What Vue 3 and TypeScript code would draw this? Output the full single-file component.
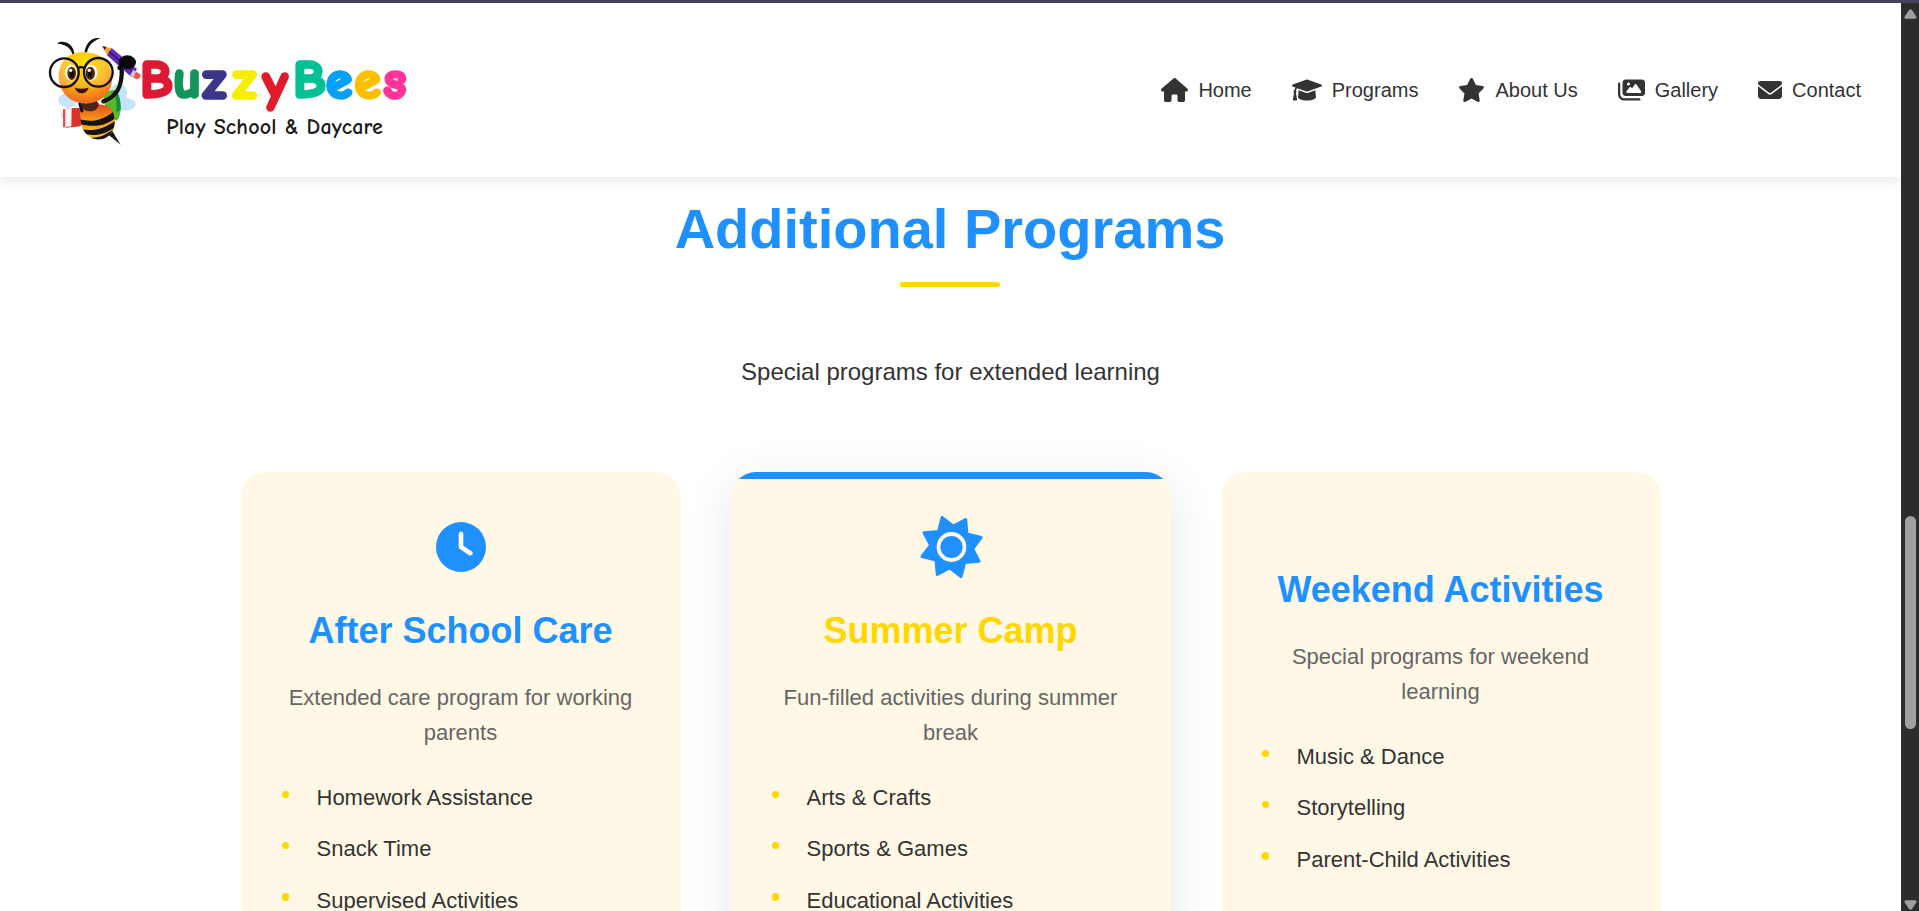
<script setup lang="ts">
interface NavItem {
  label: string
  width: number
  viewBox: string
  path: string
}

interface Program {
  title: string
  description: string
  icon: 'clock' | 'sun' | null
  featured: boolean
  features: string[]
}

interface Letter {
  char: string
  x: number
  y: number
  color: string
}

const letters: Letter[] = [
  { char: 'B', x: 140.2, y: 97, color: '#dc1a36' },
  { char: 'u', x: 173.2, y: 97, color: '#12945a' },
  { char: 'z', x: 203, y: 98, color: '#3b3689' },
  { char: 'z', x: 233.2, y: 98, color: '#f6f000' },
  { char: 'y', x: 262.9, y: 99.5, color: '#e01c2b' },
  { char: 'B', x: 293.3, y: 97, color: '#04c095' },
  { char: 'e', x: 326, y: 97.5, color: '#03a1f7' },
  { char: 'e', x: 354.6, y: 97.5, color: '#ffbf00' },
  { char: 's', x: 383.6, y: 98, color: '#ff3399' },
]

const navItems: NavItem[] = [
  {
    label: 'Home',
    width: 27,
    viewBox: '0 0 576 512',
    path: 'M575.8 255.5c0 18-15 32.1-32 32.1l-32 0 .7 160.2c0 2.7-.2 5.4-.5 8.1l0 16.2c0 22.1-17.9 40-40 40l-16 0c-1.1 0-2.2 0-3.3-.1c-1.4 .1-2.8 .1-4.2 .1L416 512l-24 0c-22.1 0-40-17.9-40-40l0-24 0-64c0-17.7-14.3-32-32-32l-64 0c-17.7 0-32 14.3-32 32l0 64 0 24c0 22.1-17.9 40-40 40l-24 0-31.9 0c-1.5 0-3-.1-4.5-.2c-1.2 .1-2.4 .2-3.6 .2l-16 0c-22.1 0-40-17.9-40-40l0-112c0-.9 0-1.9 .1-2.8l0-69.7-32 0c-18 0-32-14-32-32.1c0-9 3-17 10-24L266.4 8c7-7 15-8 22-8s15 2 21 7L564.8 231.5c8 7 12 15 11 24z',
  },
  {
    label: 'Programs',
    width: 30,
    viewBox: '0 0 640 512',
    path: 'M623.1 136.9l-282.7-101.2c-13.73-4.91-28.7-4.91-42.43 0L16.05 136.9C6.438 140.4 0 149.6 0 160s6.438 19.65 16.05 23.09L76.07 204.6c-11.89 15.8-20.26 34.16-24.55 53.95C40.05 263.4 32 274.8 32 288c0 9.953 4.814 18.49 11.94 24.36l-24.83 149C17.48 471.1 25 480 34.89 480H93.11c9.887 0 17.41-8.879 15.78-18.63l-24.83-149C91.19 306.5 96 297.1 96 288c0-10.29-5.174-19.03-12.72-24.89c4.252-17.76 12.88-33.82 24.94-47.03l190.6 68.23c13.73 4.91 28.7 4.91 42.43 0l282.7-101.2C633.6 179.6 640 170.4 640 160S633.6 140.4 623.1 136.9zM351.1 314.4C341.7 318.1 330.9 320 320 320c-10.92 0-21.69-1.867-32-5.555L142.8 262.5L128 405.3C128 446.6 213.1 480 320 480c105.1 0 192-33.4 192-74.67l-14.78-142.9L351.1 314.4z',
  },
  {
    label: 'About Us',
    width: 27,
    viewBox: '0 0 576 512',
    path: 'M316.9 18C311.6 7 300.4 0 288.1 0s-23.4 7-28.8 18L195 150.3 51.4 171.5c-12 1.8-22 10.2-25.7 21.7s-.7 24.2 7.9 32.7L137.8 329 113.2 474.7c-2 12 3 24.2 12.9 31.3s23 8 33.8 2.3l128.3-68.5 128.3 68.5c10.8 5.7 23.9 4.9 33.8-2.3s14.9-19.3 12.9-31.3L438.5 329 542.7 225.9c8.6-8.5 11.7-21.2 7.9-32.7s-13.7-19.9-25.7-21.7L381.2 150.3 316.9 18z',
  },
  {
    label: 'Gallery',
    width: 27,
    viewBox: '0 0 576 512',
    path: 'M160 32c-35.3 0-64 28.7-64 64l0 224c0 35.3 28.7 64 64 64l352 0c35.3 0 64-28.7 64-64l0-224c0-35.3-28.7-64-64-64L160 32zM396 138.7l96 144c4.9 7.4 5.4 16.8 1.2 24.6S480.9 320 472 320l-144 0-48 0-80 0c-9.2 0-17.6-5.3-21.6-13.6s-2.9-18.2 2.9-25.4l64-80c4.6-5.7 11.4-9 18.7-9s14.2 3.3 18.7 9l17.3 21.6 56-84C360.5 132 368 128 376 128s15.5 4 20 10.7zM192 128a32 32 0 1 1 64 0 32 32 0 1 1 -64 0zM48 120c0-13.3-10.7-24-24-24S0 106.7 0 120L0 344c0 75.1 60.9 136 136 136l320 0c13.3 0 24-10.7 24-24s-10.7-24-24-24l-320 0c-48.6 0-88-39.4-88-88l0-224z',
  },
  {
    label: 'Contact',
    width: 24,
    viewBox: '0 0 512 512',
    path: 'M48 64C21.5 64 0 85.5 0 112c0 15.1 7.1 29.3 19.2 38.4L236.8 313.6c11.4 8.5 27 8.5 38.4 0L492.8 150.4c12.1-9.1 19.2-23.3 19.2-38.4c0-26.5-21.5-48-48-48L48 64zM0 176L0 384c0 35.3 28.7 64 64 64l384 0c35.3 0 64-28.7 64-64l0-208L294.4 339.2c-22.8 17.1-54 17.1-76.8 0L0 176z',
  },
]

const programs: Program[] = [
  {
    title: 'After School Care',
    description: 'Extended care program for working parents',
    icon: 'clock',
    featured: false,
    features: ['Homework Assistance', 'Snack Time', 'Supervised Activities'],
  },
  {
    title: 'Summer Camp',
    description: 'Fun-filled activities during summer break',
    icon: 'sun',
    featured: true,
    features: ['Arts & Crafts', 'Sports & Games', 'Educational Activities'],
  },
  {
    title: 'Weekend Activities',
    description: 'Special programs for weekend learning',
    icon: null,
    featured: false,
    features: ['Music & Dance', 'Storytelling', 'Parent-Child Activities'],
  },
]
</script>

<template>
  <div class="window">
    <div class="window-edge"></div>
    <div class="viewport">
      <div class="page">
        <header class="header">
          <svg class="logo" viewBox="40 25 380 130" role="img" aria-label="BuzzyBees Play School & Daycare">
            <defs>
              <radialGradient id="face" cx="0.48" cy="0.2" r="0.85">
                <stop offset="0" stop-color="#ffe000" />
                <stop offset="0.5" stop-color="#fdb913" />
                <stop offset="1" stop-color="#ee5a24" />
              </radialGradient>
              <linearGradient id="body" x1="0" y1="0" x2="0" y2="1">
                <stop offset="0" stop-color="#e8401c" />
                <stop offset="0.5" stop-color="#f8a01c" />
                <stop offset="1" stop-color="#ffc928" />
              </linearGradient>
              <linearGradient id="pencil" x1="0" y1="1" x2="1" y2="0">
                <stop offset="0" stop-color="#43219b" />
                <stop offset="1" stop-color="#9033d4" />
              </linearGradient>
              <clipPath id="abdomen">
                <path d="M122 243C150 234 190 234 212 248C232 280 226 318 204 334C186 348 160 347 143 331C120 310 116 278 122 243Z" />
              </clipPath>
            </defs>

            <g transform="translate(40 25) scale(0.33333)">
              <g fill="#c5e4f8">
                <ellipse cx="236" cy="204" rx="25" ry="29" />
                <ellipse cx="257" cy="238" rx="30" ry="19" />
                <ellipse cx="84" cy="226" rx="29" ry="22" />
                <ellipse cx="90" cy="270" rx="27" ry="22" />
              </g>
              <path d="M190 215C205 190 228 188 236 212C244 240 244 270 232 286C222 288 208 278 200 265Z" fill="#55b92f" />
              <path d="M214 207C231 207 232 241 228 262L242 256C244 227 236 197 222 196Z" fill="#168f43" />
              <path d="M200 325L242 359L219 322L207 303Z" fill="#111" />
              <g clip-path="url(#abdomen)">
                <rect x="110" y="230" width="125" height="120" fill="url(#body)" />
                <path d="M118 283C155 293 190 286 219 260L228 277C195 306 155 306 118 297Z" fill="#17120f" />
                <path d="M120 311C156 322 193 311 226 287L225 305C200 328 160 336 128 325Z" fill="#17120f" />
                <path d="M136 335C165 343 192 335 220 313L202 348L152 350Z" fill="#17120f" />
              </g>
              <ellipse cx="150" cy="240" rx="26" ry="19" fill="#4b2415" />
              <path d="M190 229C224 218 249 193 245 126" fill="none" stroke="#111" stroke-width="13" stroke-linecap="round" />
              <path d="M119 235L126 258" stroke="#111" stroke-width="9" stroke-linecap="round" />
              <path d="M75 252L119 249L122 303L77 308Z" fill="#b91f21" />
              <path d="M70 253L97 249L96 304L70 307Z" fill="#fff3f1" />
              <path d="M69 253L76 252L76 307L69 307Z" fill="#e4504d" />
              <path d="M95 250L119 249L122 303L94 307Z" fill="#d9332a" />
              <path d="M187 63L215 70L202 91Z" fill="#f3a23a" />
              <path d="M187 63L199 66L194 76Z" fill="#382117" />
              <path d="M215 69L291 132L275 157L201 91Z" fill="url(#pencil)" />
              <path d="M207 80L285 144" stroke="#35167e" stroke-width="5" />
              <path d="M279 134L291 142L282 160L270 153Z" fill="#c9c6d8" />
              <path d="M288 140L301 148C303 158 295 165 288 162L280 158Z" fill="#ef5a49" />
              <ellipse cx="262" cy="112" rx="26" ry="21" fill="#090909" />
              <ellipse cx="240" cy="128" rx="8" ry="7" fill="#090909" />
              <path d="M98 91C93 69 79 60 50 55C65 44 98 50 103 84Z" fill="#111" />
              <path d="M133 84C137 54 157 35 181 40C160 48 146 60 141 82Z" fill="#111" />
              <path d="M56 151C58 106 88 82 130 82C178 82 211 107 216 153C219 196 194 232 138 236C85 234 57 200 56 151Z" fill="url(#face)" />
              <ellipse cx="74" cy="143" rx="42" ry="43" fill="#fff" opacity="0.17" />
              <ellipse cx="176" cy="142" rx="42" ry="43" fill="#fff" opacity="0.12" />
              <ellipse cx="93" cy="143" rx="17" ry="24" fill="#fff" />
              <ellipse cx="153" cy="143" rx="19" ry="24" fill="#fff" />
              <ellipse cx="95" cy="145" rx="13" ry="20" fill="#5c2c16" />
              <ellipse cx="151" cy="145" rx="14" ry="20" fill="#5c2c16" />
              <ellipse cx="96" cy="146" rx="7" ry="13" fill="#180f0c" />
              <ellipse cx="150" cy="146" rx="7" ry="13" fill="#180f0c" />
              <circle cx="92" cy="136" r="5" fill="#fff" />
              <circle cx="148" cy="136" r="5" fill="#fff" />
              <g fill="none" stroke="#111" stroke-width="7">
                <circle cx="73" cy="143" r="43" />
                <circle cx="175" cy="142" r="43" />
                <path d="M114 129Q124 124 134 129" />
              </g>
              <path d="M104 188C116 192 131 192 146 188C139 210 112 210 104 188Z" fill="#3c1010" />
            </g>

            <g class="wordmark">
              <text
                v-for="(letter, index) in letters"
                :key="index"
                :x="letter.x"
                :y="letter.y"
                :fill="letter.color"
                :stroke="letter.color"
              >{{ letter.char }}</text>
            </g>
            <text class="tagline" x="166.3" y="134" textLength="216.5" lengthAdjust="spacing">Play School &amp; Daycare</text>
          </svg>

          <nav class="nav">
            <a v-for="item in navItems" :key="item.label" class="nav-link">
              <svg :width="item.width" height="24" :viewBox="item.viewBox" aria-hidden="true">
                <path :d="item.path" fill="currentColor" />
              </svg>
              <span>{{ item.label }}</span>
            </a>
          </nav>
        </header>

        <main class="section">
          <h2 class="section-title">Additional Programs</h2>
          <p class="section-subtitle">Special programs for extended learning</p>

          <div class="cards">
            <article v-for="program in programs" :key="program.title" class="card" :class="{ featured: program.featured }">
              <div class="card-icon" :class="{ empty: !program.icon }">
                <svg v-if="program.icon === 'clock'" width="50" height="50" viewBox="0 0 512 512" aria-hidden="true">
                  <path
                    fill="currentColor"
                    fill-rule="evenodd"
                    d="M256 0a256 256 0 1 1 0 512A256 256 0 1 1 256 0zM232 120l0 136c0 8 4 15.5 10.7 20l96 64c11 7.4 25.9 4.4 33.3-6.7s4.4-25.9-6.7-33.3L280 243.2 280 120c0-13.3-10.7-24-24-24s-24 10.7-24 24z"
                  />
                </svg>
                <svg v-else-if="program.icon === 'sun'" width="64" height="62" viewBox="-3 0.5 190 186" aria-hidden="true">
                  <path
                    d="M65 5L99 31L136 11L140 54L182 65L157 99L176 136L133 140L122 182L88 156L51 176L47 133L5 122L31 88L11 51L55 47Z"
                    fill="currentColor"
                    stroke="currentColor"
                    stroke-width="9"
                    stroke-linejoin="round"
                  />
                  <circle cx="93.5" cy="93.5" r="39" fill="none" stroke="#fff8e6" stroke-width="11.5" />
                </svg>
              </div>
              <h3 class="card-title">{{ program.title }}</h3>
              <p class="card-text">{{ program.description }}</p>
              <ul class="features">
                <li v-for="feature in program.features" :key="feature">{{ feature }}</li>
              </ul>
            </article>
          </div>
        </main>
      </div>

      <div class="scrollbar">
        <svg width="13" height="10" viewBox="0 0 13 10" aria-hidden="true">
          <path d="M5 1Q6.500-.6 8 1L12.300 7.600Q13 9.800 11 9.800H2Q0 9.800.700 7.600Z" fill="#a0a0a0" />
        </svg>
        <div class="thumb"></div>
        <svg width="13" height="10" viewBox="0 0 13 10" aria-hidden="true">
          <path d="M5 9Q6.500 10.600 8 9L12.300 2.400Q13 .200 11 .200H2Q0 .200.700 2.400Z" fill="#a0a0a0" />
        </svg>
      </div>
    </div>
  </div>
</template>

<style>
body {
  margin: 0;
  overflow: hidden;
}
</style>

<style scoped>
.window {
  display: flex;
  flex-direction: column;
  width: 100%;
  height: 911px;
  overflow: hidden;
  background: #fff;
  color: #333;
  font-family: "Liberation Sans", Arial, sans-serif;
  line-height: 1.6;
}

.window-edge {
  flex: none;
  height: 3px;
  background: #454358;
}

.viewport {
  display: flex;
  flex: 1;
  min-height: 0;
}

.page {
  flex: 1;
  min-width: 0;
  overflow: hidden;
}

.header {
  display: flex;
  align-items: center;
  justify-content: space-between;
  box-sizing: border-box;
  height: 174px;
  padding: 0 40px;
  background: #fff;
  box-shadow: 0 2.5px 12.5px rgba(0, 0, 0, 0.1);
}

.logo {
  width: 380px;
  height: 130px;
}

.wordmark text {
  font: 700 53px "Comic Neue", "Comic Sans MS", "DejaVu Sans", sans-serif;
  stroke-width: 3.6;
  stroke-linejoin: round;
}

.tagline {
  fill: #1b1b1b;
  font: 700 22px "Comic Neue", "Comic Sans MS", Lato, sans-serif;
}

.nav {
  display: flex;
  align-items: center;
  gap: 40px;
}

.nav-link {
  display: flex;
  align-items: center;
  gap: 10px;
  color: #333;
  font-size: 20px;
}

.section {
  padding-top: 7px;
}

.section-title {
  display: flex;
  flex-direction: column;
  align-items: center;
  gap: 8px;
  margin: 0;
  padding-right: 1px;
  color: #1e90ff;
  font-size: 56px;
  font-weight: 700;
  line-height: 90px;
}

.section-title::after {
  content: "";
  width: 100px;
  height: 5px;
  border-radius: 2.5px;
  background: #ffd700;
}

.section-subtitle {
  margin: 66px 0 80.6px;
  font-size: 24px;
  line-height: 38.4px;
  text-align: center;
}

.cards {
  display: grid;
  grid-template-columns: repeat(3, 440px);
  justify-content: center;
  gap: 50px;
}

.card {
  box-sizing: border-box;
  height: 560px;
  padding: 50px 40px;
  border-radius: 25px;
  background: #fff8e6;
  text-align: center;
}

.card.featured {
  background: linear-gradient(#1e90ff 7px, #fff8e6 7px);
  box-shadow: 0 12.5px 50px rgba(0, 0, 0, 0.1);
}

.card-icon {
  display: flex;
  align-items: center;
  justify-content: center;
  height: 50px;
  margin-bottom: 30px;
  color: #1e90ff;
}

.card-icon svg {
  flex: none;
}

.card-icon.empty {
  height: 9px;
}

.card-title {
  margin: 0 0 20px;
  color: #1e90ff;
  font-size: 36px;
  font-weight: 700;
  line-height: 57.6px;
}

.featured .card-title {
  color: #ffd700;
}

.card-text {
  margin: 0 0 30px;
  color: #666;
  font-size: 22px;
  line-height: 35.2px;
}

.features {
  display: flex;
  flex-direction: column;
  gap: 16.25px;
  margin: 0;
  padding: 0;
  list-style: none;
  font-size: 22px;
  line-height: 35.2px;
  text-align: left;
}

.features li {
  display: flex;
}

.features li::before {
  content: "";
  flex: none;
  width: 7.5px;
  height: 7.5px;
  margin: 10.5px 27.5px 0 1px;
  border-radius: 50%;
  background: #ffd700;
}

.scrollbar {
  display: flex;
  flex: none;
  flex-direction: column;
  align-items: center;
  justify-content: space-between;
  box-sizing: border-box;
  width: 18px;
  padding: 6px 0 1px 1px;
  background: #2c2c2c;
}

.thumb {
  flex: none;
  width: 11px;
  height: 213px;
  margin: 0 0 171px;
  border-radius: 6px;
  background: #a0a0a0;
}

.scrollbar svg:first-child {
  margin-bottom: auto;
}
</style>
